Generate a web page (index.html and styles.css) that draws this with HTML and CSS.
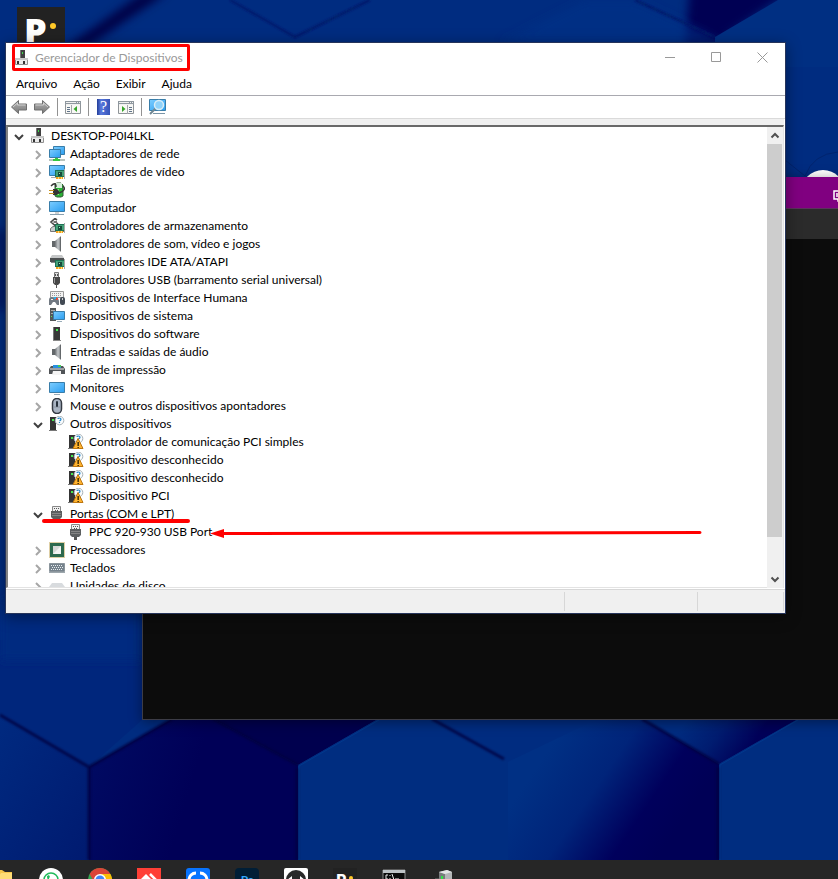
FILE: index.html
```html
<!DOCTYPE html>
<html lang="pt-BR">
<head>
<meta charset="utf-8">
<title>Gerenciador de Dispositivos</title>
<link rel="stylesheet" href="styles.css">
</head>
<body>
<svg class="defs" aria-hidden="true">
  <defs>
    <linearGradient id="scr" x1="0" y1="0" x2="1" y2="1"><stop offset="0" stop-color="#7ccdff"/><stop offset="1" stop-color="#2a9df0"/></linearGradient>
    <linearGradient id="spk" x1="0" y1="0" x2="1" y2="0"><stop offset="0" stop-color="#6b6f72"/><stop offset=".5" stop-color="#c4c8cb"/><stop offset="1" stop-color="#777b7e"/></linearGradient>
    <linearGradient id="arr" x1="0" y1="0" x2="0" y2="1"><stop offset="0" stop-color="#b4b4b4"/><stop offset="1" stop-color="#777"/></linearGradient>
  </defs>
  <symbol id="right" viewBox="0 0 16 16"><path d="M6 5l4 4-4 4" fill="none" stroke="#a6a6a6" stroke-width="2"/></symbol>
  <symbol id="down" viewBox="0 0 16 16"><path d="M4 7l4 4 4-4" fill="none" stroke="#404040" stroke-width="2"/></symbol>
  <symbol id="root" viewBox="0 0 16 16"><path d="M6 0h5v9H6z" fill="#404040"/><path d="M6 0h1v9H6z" fill="#777"/><path d="M8 2h1v2H8z" fill="#3be04a"/><path d="M1.500 8.500h12v6h-12z" fill="#ececec" stroke="#919191"/><path d="M1 8h13v2H1z" fill="#c8c8c8"/><path d="M3 11h2v3H3zM9 11h2v3H9z" fill="#333"/></symbol>
  <symbol id="net" viewBox="0 0 16 16"><path d="M4.500 .5h11v8h-11z" fill="url(#scr)" stroke="#397da9"/><path d="M.5 3.500h11v8H.5z" fill="url(#scr)" stroke="#397da9"/><path d="M0 13h16v2H0z" fill="#b8c3bd"/><path d="M4 13h7v2H4zM6 12h3v3H6z" fill="#36c63f"/></symbol>
  <symbol id="card" viewBox="0 0 16 16"><path d="M6 6h10v7H6z" fill="#1d7254"/><path d="M7 7h8v5H7z" fill="#45a178"/><path d="M9 8h4v4H9z" fill="#174a3a"/><path d="M10 9h1v1h-1z" fill="#9ee8be"/><path d="M7 13h7v2H7z" fill="#f5a11c"/><path d="M9 13h1v2H9zM12 13h1v2h-1z" fill="#ffe076"/><path d="M15 5h1v10h-1z" fill="#aaa"/></symbol>
  <symbol id="video" viewBox="0 0 16 16"><path d="M.5 1.500h15v10H.5z" fill="url(#scr)" stroke="#397da9"/><path d="M2 13h5v1H2z" fill="#aaa"/><use href="#card"/></symbol>
  <symbol id="bat" viewBox="0 0 16 16"><path d="M6 2l2-1h4l2 2v11l-2 1H8l-2-1z" fill="#27b234" stroke="#355a37"/><path d="M7 1h6v5H7z" fill="#d6eedb"/><path d="M8 7h2v6H8z" fill="#89ec7e"/><path d="M2 4q5-5 5 1M14 4q4 4-4 7H7" fill="none" stroke="#353535" stroke-width="1.500"/><path d="M4 7h4l2 2v2l-2 2H4z" fill="#343434"/><path d="M0 8h5v1H0zM0 11h5v1H0z" fill="#c59220"/></symbol>
  <symbol id="mon" viewBox="0 0 16 16"><path d="M.5 1.500h15v10H.5z" fill="url(#scr)" stroke="#397da9"/><path d="M6 12h4v2H6z" fill="#d1d1d1"/><path d="M1 14h14v1H1z" fill="#8ba1b0"/></symbol>
  <symbol id="monitor" viewBox="0 0 16 16"><path d="M.5 2.500h15v10H.5z" fill="url(#scr)" stroke="#397da9"/><path d="M5 14h6v1H5z" fill="#9aacb8"/></symbol>
  <symbol id="stor" viewBox="0 0 16 16"><path d="M8 2L6 .500 2 4l4 3.500 3-2.500M4.500 4H8" fill="none" stroke="#484848" stroke-width="1.600"/><path d="M1.500 10.500L4 8.500h9l2 2v3H1.500z" fill="#c8cdcd" stroke="#777"/><use href="#card"/></symbol>
  <symbol id="sound" viewBox="0 0 16 16"><path d="M3 5h3v6H3z" fill="#63676a"/><path d="M6 5l6-5v16l-6-5z" fill="url(#spk)"/><path d="M11 1h1v14h-1z" fill="#64686b"/></symbol>
  <symbol id="ide" viewBox="0 0 16 16"><path d="M3 1h10l2 3H1z" fill="#c5c7c8"/><path d="M1 4h14v4H1z" fill="#4d5051"/><path d="M2 8h4v1H2z" fill="#888"/><use href="#card"/></symbol>
  <symbol id="usb" viewBox="0 0 16 16"><path d="M5.500.5h4v5h-4z" fill="#e1e1e1" stroke="#777"/><path d="M6 2h1v2H6zM8 2h1v2H8z" fill="#555"/><path d="M4 5h7v6l-2 2H6l-2-2z" fill="#484848"/><path d="M5 6h1v5H5z" fill="#999"/><path d="M7 12h1v4H7z" fill="#555"/></symbol>
  <symbol id="hid" viewBox="0 0 16 16"><path d="M1.500 1.500h13v6h-13z" fill="#f2f2f2" stroke="#9a9a9a"/><path d="M3 3.500h10M3 5.500h10" stroke="#999" stroke-dasharray="1 1"/><path d="M0 10q0-3 3-3l2 1 2-1q2 0 3 4v4H8l-2-3H4l-2 3H0z" fill="#717982"/><path d="M2 9h2v1H2z" fill="#eee"/><path d="M7 8h2v2H7z" fill="#e34b3c"/><path d="M5 7h2v2H5z" fill="#27b1ed"/><rect x="11" y="7" width="5" height="8" rx="2" fill="#424a54"/><path d="M13 8h1v2h-1z" fill="#ccc"/></symbol>
  <symbol id="sys" viewBox="0 0 16 16"><path d="M1 0h6v13H1z" fill="#535758"/><path d="M2 2h4v1H2zM2 5h4v1H2z" fill="#aaa"/><path d="M2 8h1v1H2z" fill="#5be45b"/><path d="M4.500 3.500h11v8h-11z" fill="url(#scr)" stroke="#397da9"/><path d="M8 13h5v1H8z" fill="#9aacb8"/></symbol>
  <symbol id="soft" viewBox="0 0 16 16"><path d="M4 1h7v13H4z" fill="#383838"/><path d="M4 1h1v13H4z" fill="#777"/><path d="M7 3h2v2H7z" fill="#3fec4d"/><path d="M4 14h8v1H4z" fill="#888"/></symbol>
  <symbol id="print" viewBox="0 0 16 16"><path d="M4 3h8v3H4z" fill="#288fdf"/><path d="M9 3h3v2H9z" fill="#45cb54"/><path d="M2 4h2v2h8V4h2l2 3v5H0V7z" fill="#505457"/><path d="M1 6h14v2H1z" fill="#9da0a2"/><path d="M4 9h8v4H3z" fill="#f4f4f4"/></symbol>
  <symbol id="mouse" viewBox="0 0 16 16"><rect x="3.500" y=".5" width="9" height="15" rx="4.500" fill="#a9b4c3" stroke="#343a43" stroke-width="1.500"/><path d="M4 9h8" stroke="#8c96a3"/><rect x="7" y="3" width="2" height="6" rx="1" fill="#26303b"/></symbol>
  <symbol id="unk" viewBox="0 0 16 16"><path d="M1 1h6v13H1z" fill="#343434"/><path d="M3 3h2v2H3z" fill="#43e951"/><path d="M0 14h8v1H0z" fill="#777"/><circle cx="10.500" cy="4.500" r="4.300" fill="#fafcfd" stroke="#a8b2b8"/><path d="M9 3q0-1 1.500-1T12 3.200Q12 4 10.500 5M10.500 6v1" fill="none" stroke="#2487cc" stroke-width="1.200"/></symbol>
  <symbol id="warn" viewBox="0 0 16 16"><use href="#unk"/><path d="M10 4.500l5 10H5z" fill="#ffb32e" stroke="#bd7610"/><path d="M9.500 8h1.300v4H9.500zM9.500 13h1.300v1H9.500z" fill="#221800"/></symbol>
  <symbol id="port" viewBox="0 0 16 16"><path d="M3.500.5h8v5h-8z" fill="#f0f0f0" stroke="#888"/><path d="M5 2h1v1H5zM7 2h1v1H7zM9 2h1v1H9zM6 4h1v1H6zM8 4h1v1H8z" fill="#555"/><path d="M2 5h11v6l-2 2H4l-2-2z" fill="#5c5f60"/><path d="M3 7.500h9M3 9.500h9" stroke="#858585"/><path d="M6 13h3v3H6z" fill="#555"/></symbol>
  <symbol id="cpu" viewBox="0 0 16 16"><path d="M.5.5h15v15H.5z" fill="none" stroke="#bc9e4b" stroke-dasharray="1 1"/><path d="M1 1h14v14H1z" fill="#2d694e"/><path d="M4 4h8v8H4z" fill="#d6d8d6"/><path d="M4 12l8-8v8z" fill="#f3f3f3"/></symbol>
  <symbol id="kbd" viewBox="0 0 16 16"><path d="M.5 3.500h15v8H.5z" fill="#75828c" stroke="#8b959c"/><path d="M2 5.500h12M3 7.500h11M2 9.500h12" stroke="#e8edf0" stroke-dasharray="1 1"/><path d="M0 12h16v1H0z" fill="#9da7ad"/></symbol>
  <symbol id="disk" viewBox="0 0 16 16"><path d="M3 5h10l3 4H0z" fill="#d8dbde"/><path d="M0 9h16v4H0z" fill="#888"/></symbol>
  <symbol id="arrow" viewBox="0 0 16 16"><path d="M.5 8L7.500 1.500V5h8v6h-8v3.500z" fill="url(#arr)" stroke="#707070"/><path d="M2 8l4.500-4v2h8" fill="none" stroke="#d0d0d0"/></symbol>
  <symbol id="pane" viewBox="0 0 16 16"><path d="M.5 2.500h15v12H.5z" fill="#f8f8f5" stroke="#8f9498"/><path d="M0 2h16v4H0z" fill="#8f989f"/><path d="M1 3.500h10M12 3.500h1M14 3.500h1M1 5.500h14" stroke="#f0f0f0"/><path d="M6.500 6v9" stroke="#a4a8ab"/><path d="M2 8.500h3M2 10.500h3M2 12.500h3" stroke="#60748b"/><path d="M12 7v6L8.500 10z" fill="#36a52b"/></symbol>
  <symbol id="pane2" viewBox="0 0 16 16"><path d="M.5 2.500h15v12H.5z" fill="#f8f8f5" stroke="#8f9498"/><path d="M0 2h16v4H0z" fill="#8f989f"/><path d="M1 3.500h10M12 3.500h1M14 3.500h1M1 5.500h14" stroke="#f0f0f0"/><path d="M9.500 6v9" stroke="#a4a8ab"/><path d="M11 8.500h3M11 10.500h3M11 12.500h3" stroke="#60748b"/><path d="M4 7v6l3.500-3z" fill="#36a52b"/></symbol>
  <symbol id="scan" viewBox="0 0 17 16"><path d="M.5.5h16v11H.5z" fill="url(#scr)" stroke="#397da9"/><path d="M4 14h12v1H4z" fill="#7994a6"/><path d="M1 15l6-6" stroke="#718793" stroke-width="2"/><circle cx="10" cy="6" r="4.500" fill="#8fd2fa" stroke="#d8edf7" stroke-width="1.500"/></symbol>
</svg>

<div class="screen">
  <main class="desktop">
    <svg class="wallpaper" viewBox="0 0 838 860" preserveAspectRatio="xMidYMid slice" aria-hidden="true">
      <defs>
        <linearGradient id="w1" gradientUnits="userSpaceOnUse" x1="690" y1="715" x2="745" y2="755"><stop offset="0" stop-color="#002c80"/><stop offset=".5" stop-color="#001c70"/><stop offset="1" stop-color="#000058"/></linearGradient>
        <linearGradient id="w2" gradientUnits="userSpaceOnUse" x1="555" y1="740" x2="680" y2="825"><stop offset="0" stop-color="#003084"/><stop offset=".4" stop-color="#00247a"/><stop offset=".75" stop-color="#00005c"/><stop offset="1" stop-color="#000056"/></linearGradient>
        <linearGradient id="w3" x1="0" y1="0" x2="1" y2="1"><stop offset="0" stop-color="#002a80"/><stop offset="1" stop-color="#001a70"/></linearGradient>
        <linearGradient id="w4" gradientUnits="userSpaceOnUse" x1="89" y1="760" x2="190" y2="790"><stop offset="0" stop-color="#000a62"/><stop offset="1" stop-color="#000057"/></linearGradient>
        <filter id="soften" x="-40%" y="-40%" width="180%" height="180%"><feGaussianBlur stdDeviation="5"/></filter>
        <filter id="edge" x="-10%" y="-10%" width="120%" height="120%"><feGaussianBlur stdDeviation="1"/></filter>
      </defs>
      <path d="M0 0h838v860H0z" fill="#002c80"/>
      <path d="M144-8h24L82 50H62z" fill="#000044" filter="url(#soften)"/>
      <path d="M690-16h110l-85 60-30 0z" fill="#000052" filter="url(#soften)"/>
      <path d="M585 0h50l80 37v6H500z" fill="#003388" opacity=".6" filter="url(#soften)"/>
      <path d="M778 0l-63 37v30h123V0z" fill="#002f82"/>
      <path d="M230 0l65 37 75-37M635 0l80 37" fill="none" stroke="#001a68" stroke-width="2" filter="url(#edge)"/>
      <path d="M0 230q6 30 0 80" fill="none" stroke="#00145e" stroke-width="8" filter="url(#soften)"/>
      <path d="M0 640h142v80l-53 47-89-52z" fill="#00267c"/>
      <path d="M0 600h142v60H0z" fill="#002a80" filter="url(#soften)"/>
      <path d="M0 715l89 52v93H0z" fill="url(#w3)"/>
      <path d="M89 767l83-48h41l85 46v95H89z" fill="url(#w4)"/>
      <path d="M213 719h165l-80 46z" fill="#00004e"/>
      <path d="M298 765l80-46h54l76 43v98H298z" fill="#002d80"/>
      <path d="M508 762l90-43h44l77 45v96H508z" fill="url(#w2)"/>
      <path d="M642 719h156l-79 45z" fill="url(#w1)"/>
      <path d="M719 764l79-45h40v141H719z" fill="#002d80"/>
      <path d="M0 715l89 52 83-48M213 719l85 46M432 719l72 40M642 719l77 45M89 767v93M297 768v92M718 767v93" fill="none" stroke="#00003f" stroke-width="3" opacity=".8" filter="url(#edge)"/>
      <path d="M509 850v-88" stroke="#001a6c" stroke-width="2" filter="url(#edge)"/>
      <path d="M299 860v-94l80-46M720 860v-95l78-45" fill="none" stroke="#003e91" opacity=".7"/>
      <path d="M785 160l20 16M805 176q8-22 33-24" fill="none" stroke="#00246e"/>
      <circle cx="823" cy="192" r="22" fill="#fff"/>
    </svg>

    <div class="shortcut"><span>P</span><i></i></div>

    <section class="console" aria-label="Console">
      <div class="console-title">
        <svg viewBox="0 0 12 12" width="12" height="12"><path d="M1 1h10v8H1zM3 4h3M3 6h5M5 9v2h4" fill="none" stroke="#fff" stroke-width="1.500"/></svg>
      </div>
      <div class="console-tabs"></div>
    </section>

    <section class="window" aria-label="Gerenciador de Dispositivos">
      <header class="titlebar">
        <svg class="icon"><use href="#root"/></svg>
        <h1>Gerenciador de Dispositivos</h1>
        <span class="mark-box"></span>
        <div class="controls">
          <button aria-label="Minimizar"><svg viewBox="0 0 11 11"><path d="M0 5.500h10"/></svg></button>
          <button aria-label="Maximizar"><svg viewBox="0 0 11 11"><path d="M.5.5h9v9h-9z"/></svg></button>
          <button aria-label="Fechar"><svg viewBox="0 0 11 11"><path d="M.5.5l10 10M10.500.5l-10 10"/></svg></button>
        </div>
      </header>
      <nav class="menu">
        <button>Arquivo</button><button>Ação</button><button>Exibir</button><button>Ajuda</button>
      </nav>
      <div class="toolbar">
        <button aria-label="Voltar"><svg><use href="#arrow"/></svg></button>
        <button aria-label="Avançar"><svg class="flip"><use href="#arrow"/></svg></button>
        <hr>
        <button aria-label="Mostrar árvore"><svg><use href="#pane"/></svg></button>
        <hr>
        <button aria-label="Ajuda" class="help"><span>?</span></button>
        <button aria-label="Mostrar ações"><svg><use href="#pane2"/></svg></button>
        <hr>
        <button aria-label="Verificar alterações de hardware" class="wide"><svg><use href="#scan"/></svg></button>
      </div>
      <div class="pane">
        <ul class="tree">
          <li><div class="row"><button aria-label="Recolher"><svg><use href="#down"/></svg></button><svg class="icon"><use href="#root"/></svg><span>DESKTOP-P0I4LKL</span></div>
          <ul>
            <li><div class="row"><button aria-label="Expandir"><svg><use href="#right"/></svg></button><svg class="icon"><use href="#net"/></svg><span>Adaptadores de rede</span></div></li>
            <li><div class="row"><button aria-label="Expandir"><svg><use href="#right"/></svg></button><svg class="icon"><use href="#video"/></svg><span>Adaptadores de vídeo</span></div></li>
            <li><div class="row"><button aria-label="Expandir"><svg><use href="#right"/></svg></button><svg class="icon"><use href="#bat"/></svg><span>Baterias</span></div></li>
            <li><div class="row"><button aria-label="Expandir"><svg><use href="#right"/></svg></button><svg class="icon"><use href="#mon"/></svg><span>Computador</span></div></li>
            <li><div class="row"><button aria-label="Expandir"><svg><use href="#right"/></svg></button><svg class="icon"><use href="#stor"/></svg><span>Controladores de armazenamento</span></div></li>
            <li><div class="row"><button aria-label="Expandir"><svg><use href="#right"/></svg></button><svg class="icon"><use href="#sound"/></svg><span>Controladores de som, vídeo e jogos</span></div></li>
            <li><div class="row"><button aria-label="Expandir"><svg><use href="#right"/></svg></button><svg class="icon"><use href="#ide"/></svg><span>Controladores IDE ATA/ATAPI</span></div></li>
            <li><div class="row"><button aria-label="Expandir"><svg><use href="#right"/></svg></button><svg class="icon"><use href="#usb"/></svg><span>Controladores USB (barramento serial universal)</span></div></li>
            <li><div class="row"><button aria-label="Expandir"><svg><use href="#right"/></svg></button><svg class="icon"><use href="#hid"/></svg><span>Dispositivos de Interface Humana</span></div></li>
            <li><div class="row"><button aria-label="Expandir"><svg><use href="#right"/></svg></button><svg class="icon"><use href="#sys"/></svg><span>Dispositivos de sistema</span></div></li>
            <li><div class="row"><button aria-label="Expandir"><svg><use href="#right"/></svg></button><svg class="icon"><use href="#soft"/></svg><span>Dispositivos do software</span></div></li>
            <li><div class="row"><button aria-label="Expandir"><svg><use href="#right"/></svg></button><svg class="icon"><use href="#sound"/></svg><span>Entradas e saídas de áudio</span></div></li>
            <li><div class="row"><button aria-label="Expandir"><svg><use href="#right"/></svg></button><svg class="icon"><use href="#print"/></svg><span>Filas de impressão</span></div></li>
            <li><div class="row"><button aria-label="Expandir"><svg><use href="#right"/></svg></button><svg class="icon"><use href="#monitor"/></svg><span>Monitores</span></div></li>
            <li><div class="row"><button aria-label="Expandir"><svg><use href="#right"/></svg></button><svg class="icon"><use href="#mouse"/></svg><span>Mouse e outros dispositivos apontadores</span></div></li>
            <li><div class="row"><button aria-label="Recolher"><svg><use href="#down"/></svg></button><svg class="icon"><use href="#unk"/></svg><span>Outros dispositivos</span></div>
            <ul>
              <li><div class="row leaf"><svg class="icon"><use href="#warn"/></svg><span>Controlador de comunicação PCI simples</span></div></li>
              <li><div class="row leaf"><svg class="icon"><use href="#warn"/></svg><span>Dispositivo desconhecido</span></div></li>
              <li><div class="row leaf"><svg class="icon"><use href="#warn"/></svg><span>Dispositivo desconhecido</span></div></li>
              <li><div class="row leaf"><svg class="icon"><use href="#warn"/></svg><span>Dispositivo PCI</span></div></li>
            </ul></li>
            <li><div class="row"><button aria-label="Recolher"><svg><use href="#down"/></svg></button><svg class="icon"><use href="#port"/></svg><span>Portas (COM e LPT)</span><i class="mark-line"></i></div>
            <ul>
              <li><div class="row leaf"><svg class="icon"><use href="#port"/></svg><span>PPC 920-930 USB Port</span><svg class="mark-arrow" viewBox="0 0 494 12"><path d="M1 6.500L15 2v9z" fill="#f00"/><path d="M13 6.500L491 5.500" stroke="#f00" stroke-width="3" stroke-linecap="round"/></svg></div></li>
            </ul></li>
            <li><div class="row"><button aria-label="Expandir"><svg><use href="#right"/></svg></button><svg class="icon"><use href="#cpu"/></svg><span>Processadores</span></div></li>
            <li><div class="row"><button aria-label="Expandir"><svg><use href="#right"/></svg></button><svg class="icon"><use href="#kbd"/></svg><span>Teclados</span></div></li>
            <li><div class="row"><button aria-label="Expandir"><svg><use href="#right"/></svg></button><svg class="icon"><use href="#disk"/></svg><span>Unidades de disco</span></div></li>
          </ul></li>
        </ul>
        <div class="scrollbar">
          <button aria-label="Rolar para cima"><svg viewBox="0 0 16 17"><path d="M4.500 10.500L8 7l3.500 3.500"/></svg></button>
          <div class="track"><div class="thumb"></div></div>
          <button aria-label="Rolar para baixo"><svg viewBox="0 0 16 17"><path d="M4.500 6.500L8 10l3.500-3.500"/></svg></button>
        </div>
      </div>
      <footer class="status"><span></span><span></span><span></span></footer>
    </section>
  </main>

  <nav class="taskbar" aria-label="Barra de tarefas">
    <button aria-label="Arquivos"><svg viewBox="0 0 24 24"><path d="M0 2h12l3 2h7v20H0z" fill="#f6c64c"/><path d="M11 5h11v19H0V8h9z" fill="#ffdc76"/></svg></button>
    <button aria-label="WhatsApp"><svg viewBox="0 0 24 24"><circle cx="12" cy="12" r="12" fill="#fff"/><circle cx="12" cy="12" r="7" fill="none" stroke="#20ba5a" stroke-width="1.500"/><path d="M8 8q0 7 8 8l1-3-3-1-1 1q-3-1-3-3l1-1-1-2z" fill="#20ba5a"/></svg></button>
    <button aria-label="Chrome"><svg viewBox="0 0 24 24"><circle cx="12" cy="12" r="12" fill="#34a853"/><path d="M1.600 6A12 12 0 0 1 22.400 6H12v6H5z" fill="#db4437"/><path d="M12 6h10.400A12 12 0 0 1 12 24l5-9z" fill="#fbbc05"/><circle cx="12" cy="12" r="6" fill="#fff"/><circle cx="12" cy="12" r="4.500" fill="#4285f4"/></svg></button>
    <button aria-label="AnyDesk"><svg viewBox="0 0 24 24"><path d="M0 0h24v24H0z" fill="#ff3f36"/><path d="M9 6l6 6-6 6-6-6z" fill="#fff"/><path d="M13 6l6 6-6 6" fill="none" stroke="#fff" stroke-width="2.500"/></svg></button>
    <button aria-label="Sincronização"><svg viewBox="0 0 24 24"><rect width="24" height="24" rx="3" fill="#0874ff"/><path d="M10 5a7 7 0 0 0 0 14M14 5a7 7 0 0 1 0 14" fill="none" stroke="#fff" stroke-width="3"/></svg></button>
    <button aria-label="Photoshop" class="ps"><span>Ps</span></button>
    <button aria-label="TeamViewer"><svg viewBox="0 0 24 24"><rect width="24" height="24" rx="2" fill="#fff"/><circle cx="12" cy="12" r="10" fill="#292929"/><path d="M3 12l5-4v3h8V8l5 4-5 4v-3H8v3z" fill="#fff"/></svg></button>
    <button aria-label="P" class="pi"><span>P</span><i></i></button>
    <button aria-label="Prompt de comando"><svg viewBox="0 0 24 24"><path d="M1 2h22v20H1z" fill="#0b0b0b" stroke="#8b8b8b"/><path d="M1 2h22v3H1z" fill="#bec3c6"/><path d="M6 7H4v4h2M8 7v1M8 10v1M10 6l2 6M13 11h4" fill="none" stroke="#eee"/></svg></button>
    <button aria-label="Servidor"><svg viewBox="0 0 24 24"><path d="M8 4l8-2 5 2v20H8z" fill="#b3b6b7"/><path d="M8 4l6 2v18H8z" fill="#777b7c"/><path d="M8 4l8-2 5 2-7 2z" fill="#e4e6e7"/><path d="M10 8h2v3h-2z" fill="#2fe345"/><path d="M4 10h4v10H4z" fill="#4b4d4d"/></svg></button>
  </nav>
</div>
</body>
</html>
```
FILE: styles.css
```css
* { box-sizing: border-box; }
body { margin: 0; font: 12px/18px Lato, "Open Sans", sans-serif; color: #000; }
button { margin: 0; padding: 0; border: 0; background: none; font: inherit; color: inherit; }
ul { margin: 0; padding: 0; list-style: none; }
svg { display: block; }
.defs { position: absolute; width: 0; height: 0; }
.icon { width: 16px; height: 16px; flex: none; }

.screen { height: 100vh; display: flex; flex-direction: column; overflow: hidden; }
.desktop { position: relative; flex: 1; min-height: 0; overflow: hidden; background: #002c80; }
.wallpaper { position: absolute; inset: 0; width: 100%; height: 100%; }

.shortcut { position: absolute; left: 17px; top: 7px; width: 48px; height: 48px; padding-left: 7px; background: #222; color: #fff; font: 800 36px/48px "Open Sans", sans-serif; }
.shortcut i { position: absolute; left: 33px; top: 16px; width: 6px; height: 6px; border-radius: 50%; background: #ffc928; }

/* Console window behind the device manager */
.console { position: absolute; left: 142px; right: -80px; top: 177px; bottom: 140px; border: 1px solid #3c3c46; border-top: 0; background: #0c0c0c; box-shadow: 0 2px 12px rgba(0, 0, 0, .4); }
.console-title { display: flex; align-items: center; justify-content: flex-end; height: 32px; padding: 6px 72px 0 0; background: #800080; border-bottom: 1px solid #5b325b; }
.console-tabs { height: 30px; background: #2b2b2b; }

.window { position: absolute; left: 5px; right: 52px; top: 42px; bottom: 246px; display: flex; flex-direction: column; border: 1px solid #26345a; background: #fff; box-shadow: 0 3px 14px rgba(0, 0, 0, .4); }
.titlebar { position: relative; display: flex; align-items: center; height: 29px; padding-left: 8px; color: #999; }
.titlebar h1 { flex: 1; margin: 0 0 0 5px; font-size: 12px; font-weight: 400; }
.mark-box { position: absolute; left: 6px; top: 1px; width: 178px; height: 27px; border: 3px solid #f00; border-radius: 2px; }
.controls { display: flex; align-self: stretch; }
.controls button { display: grid; place-items: center; width: 46px; }
.controls svg { width: 11px; height: 11px; fill: none; stroke: #999; }
.menu { display: flex; gap: 16px; height: 24px; padding: 0 10px; border-bottom: 1px solid #a9a9b0; }
.toolbar { display: flex; align-items: center; gap: 7px; height: 23px; padding-left: 5px; border-bottom: 1px solid #dadada; }
.toolbar button, .toolbar svg { width: 16px; height: 16px; }
.toolbar hr { width: 1px; height: 18px; margin: 0; border: 0; background: #929292; }
.flip { transform: scaleX(-1); }
.toolbar .help { width: 13px; margin: 0 1px; background: linear-gradient(90deg, #223d98, #5878dc 30%, #3553b8); color: #fff; font: 16px/16px "Liberation Serif", serif; }
.toolbar .wide, .toolbar .wide svg { width: 17px; }

.pane { display: flex; flex: 1; min-height: 0; margin-right: 1px; border-top: 6px solid #f0f0f0; }
.tree { flex: 1; min-width: 0; overflow: hidden; padding-left: 3px; border-top: 2px solid #696969; border-left: 2px solid #828282; border-bottom: 1px solid #e3e3e3; }
.tree ul { padding-left: 19px; }
.row { position: relative; display: flex; align-items: center; height: 18px; white-space: nowrap; }
.row button, .row button svg { width: 16px; height: 16px; }
.row button { margin-right: 3px; }
.row .icon { margin-right: 5px; }
.leaf { padding-left: 19px; }
.mark-line { position: absolute; left: 12px; top: 14px; width: 148px; height: 4px; border-radius: 2px; background: #f00; z-index: 1; }
.mark-arrow { position: absolute; left: 160px; top: 4px; width: 494px; height: 12px; }
.scrollbar { display: flex; flex-direction: column; width: 17px; border-top: 2px solid #696969; border-right: 1px solid #e3e3e3; background: #f0f0f0; }
.scrollbar svg { width: 16px; height: 17px; fill: none; stroke: #505050; stroke-width: 2; }
.track { flex: 1; }
.thumb { width: 15px; height: 92%; background: #cdcdcd; }
.status { display: flex; height: 24px; margin-top: 1px; padding: 2px 1px 2px 0; border-top: 1px solid #d7d7d7; background: #f0f0f0; }
.status span { flex: none; border-right: 1px solid #d7d7d7; }
.status span:nth-child(1) { flex: 1; }
.status span:nth-child(2) { width: 133px; }
.status span:nth-child(3) { width: 86px; }

.taskbar { display: flex; gap: 25px; flex: none; height: 19px; padding-top: 8px; overflow: hidden; background: #262626; }
.taskbar button { position: relative; flex: none; width: 24px; height: 24px; }
.taskbar button:first-child { margin-left: -10px; }
.taskbar .ps { border-radius: 4px; background: #001e36; color: #31a8ff; font-size: 12px; font-weight: 700; }
.taskbar .pi { background: #222; color: #fff; font-size: 16px; font-weight: 800; text-align: left; padding-left: 3px; }
.pi i { position: absolute; left: 16px; top: 8px; width: 4px; height: 4px; border-radius: 50%; background: #ffc928; }
```
